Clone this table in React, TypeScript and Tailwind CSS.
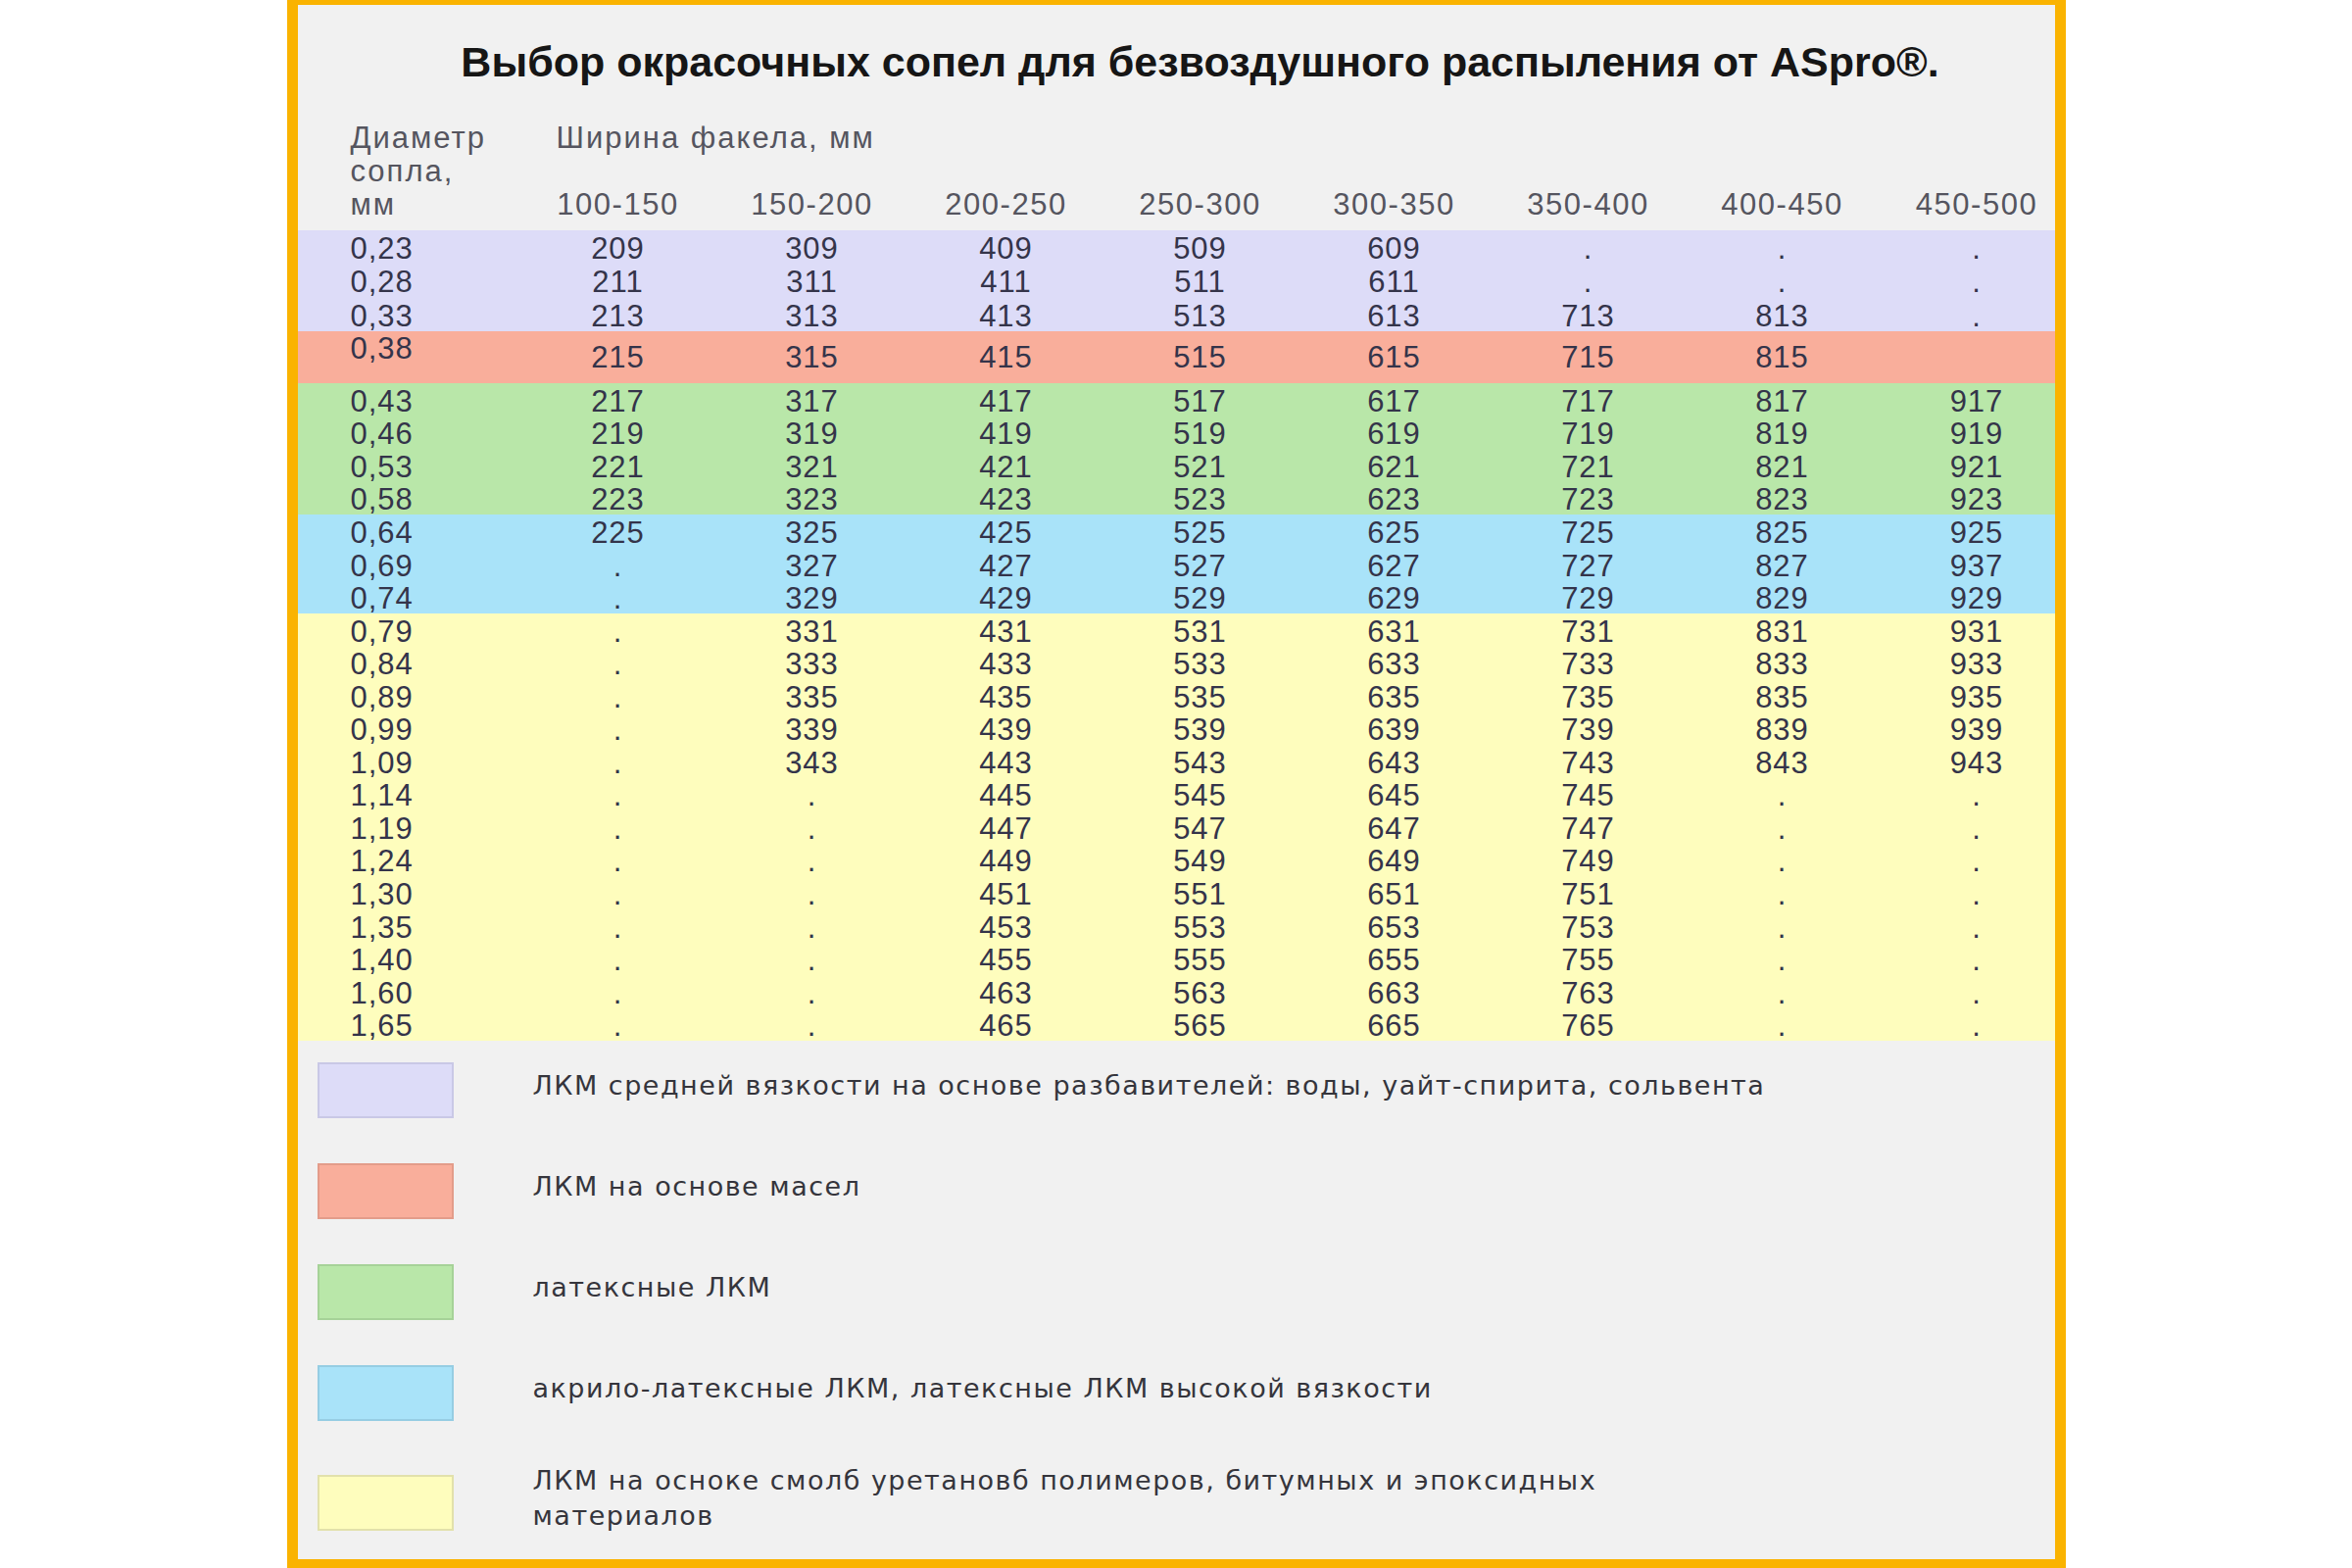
import * as React from "react";

type Band = {
  bg: string;
  h: string;
  rows: [string, string[]][];
};

const COLS = "grid grid-cols-[228px_repeat(7,198px)_1fr]";

const bands: Band[] = [
  {
    bg: "bg-[#dddcf8]",
    h: "h-[103px]",
    rows: [
      ["0,23", ["209", "309", "409", "509", "609", ".", ".", "."]],
      ["0,28", ["211", "311", "411", "511", "611", ".", ".", "."]],
      ["0,33", ["213", "313", "413", "513", "613", "713", "813", "."]],
    ],
  },
  {
    bg: "bg-[#b9e7a9]",
    h: "h-[134px]",
    rows: [
      ["0,43", ["217", "317", "417", "517", "617", "717", "817", "917"]],
      ["0,46", ["219", "319", "419", "519", "619", "719", "819", "919"]],
      ["0,53", ["221", "321", "421", "521", "621", "721", "821", "921"]],
      ["0,58", ["223", "323", "423", "523", "623", "723", "823", "923"]],
    ],
  },
  {
    bg: "bg-[#a9e3f9]",
    h: "h-[101px]",
    rows: [
      ["0,64", ["225", "325", "425", "525", "625", "725", "825", "925"]],
      ["0,69", [".", "327", "427", "527", "627", "727", "827", "937"]],
      ["0,74", [".", "329", "429", "529", "629", "729", "829", "929"]],
    ],
  },
  {
    bg: "bg-[#fefdbd]",
    h: "h-[436px]",
    rows: [
      ["0,79", [".", "331", "431", "531", "631", "731", "831", "931"]],
      ["0,84", [".", "333", "433", "533", "633", "733", "833", "933"]],
      ["0,89", [".", "335", "435", "535", "635", "735", "835", "935"]],
      ["0,99", [".", "339", "439", "539", "639", "739", "839", "939"]],
      ["1,09", [".", "343", "443", "543", "643", "743", "843", "943"]],
      ["1,14", [".", ".", "445", "545", "645", "745", ".", "."]],
      ["1,19", [".", ".", "447", "547", "647", "747", ".", "."]],
      ["1,24", [".", ".", "449", "549", "649", "749", ".", "."]],
      ["1,30", [".", ".", "451", "551", "651", "751", ".", "."]],
      ["1,35", [".", ".", "453", "553", "653", "753", ".", "."]],
      ["1,40", [".", ".", "455", "555", "655", "755", ".", "."]],
      ["1,60", [".", ".", "463", "563", "663", "763", ".", "."]],
      ["1,65", [".", ".", "465", "565", "665", "765", ".", "."]],
    ],
  },
];

const ranges = [
  "100-150",
  "150-200",
  "200-250",
  "250-300",
  "300-350",
  "350-400",
  "400-450",
  "450-500",
];

const legend = [
  {
    sw: "bg-[#dddcf8] border-[#c9c8e6]",
    lines: ["ЛКМ средней вязкости на основе разбавителей: воды, уайт-спирита, сольвента"],
  },
  { sw: "bg-[#f9ae9b] border-[#e39c8a]", lines: ["ЛКМ на основе масел"] },
  { sw: "bg-[#b9e7a9] border-[#a6d298]", lines: ["латексные ЛКМ"] },
  {
    sw: "bg-[#a9e3f9] border-[#96cde3]",
    lines: ["акрило-латексные ЛКМ, латексные ЛКМ высокой вязкости"],
  },
  {
    sw: "bg-[#fefdbd] border-[#e2e1ab]",
    lines: [
      "ЛКМ на осноке смолб уретановб полимеров, битумных и эпоксидных",
      "материалов",
    ],
  },
];

function Cells({ values }: { values: string[] }) {
  return (
    <>
      {values.map((v, i) => (
        <div key={i} className={i === 7 ? "pl-[20px] text-center" : "text-center"}>
          {v}
        </div>
      ))}
    </>
  );
}

function DataRow({ d, values }: { d: string; values: string[] }) {
  return (
    <div className={`${COLS} min-h-0 flex-1 items-center pt-[3px] leading-[29px]`}>
      <div className="pl-[54px]">{d}</div>
      <Cells values={values} />
    </div>
  );
}

function BandBlock({ band }: { band: Band }) {
  return (
    <div className={`flex flex-col ${band.bg} ${band.h}`}>
      {band.rows.map(([d, v]) => (
        <DataRow key={d} d={d} values={v} />
      ))}
    </div>
  );
}

export default function App() {
  return (
    <div className="min-h-[1600px] bg-white">
      <div className="mx-auto h-[1600px] w-[1815px] border-t-[5px] border-r-[11px] border-b-[9px] border-l-[11px] border-[#fab300] bg-[#f1f1f1]">
        <h1 className="pt-[32px] pl-[49px] text-center font-['Liberation_Sans',Arial,sans-serif] text-[43px] leading-[52px] font-bold text-[#161616]">
          Выбор окрасочных сопел для безвоздушного распыления от ASpro®.
        </h1>

        <div className="font-['Liberation_Sans',Arial,sans-serif] text-[31px] tracking-[1px]">
          <div className="mt-[35px] flex leading-[34px] tracking-[2px] text-[#55555f]">
            <div className="w-[228px] shrink-0 pl-[54px]">
              Диаметр
              <br />
              сопла,
              <br />
              мм
            </div>
            <div className="flex flex-1 flex-col">
              <div className="pl-[36px]">Ширина факела, мм</div>
              <div className="h-[34px]" />
              <div className="grid grid-cols-[repeat(7,198px)_1fr] tracking-[1.5px]">
                {ranges.map((r, i) => (
                  <div key={r} className={i === 7 ? "pl-[20px] text-center" : "text-center"}>
                    {r}
                  </div>
                ))}
              </div>
            </div>
          </div>

          <div className="mt-[9px] text-[#34344a]">
            <BandBlock band={bands[0]} />
            <div className={`${COLS} h-[53px] bg-[#f9ae9b]`}>
              <div className="pt-[3px] pl-[54px] leading-[30px]">0,38</div>
              <div className="col-span-8 grid grid-cols-[repeat(7,198px)_1fr] pt-[10px] leading-[34px]">
                <Cells values={["215", "315", "415", "515", "615", "715", "815", ""]} />
              </div>
            </div>
            <BandBlock band={bands[1]} />
            <BandBlock band={bands[2]} />
            <BandBlock band={bands[3]} />
          </div>
        </div>

        <div className="flex flex-col pt-[22px] font-['DejaVu_Sans',Verdana,sans-serif] text-[27px] leading-[36px] tracking-[1.5px] text-[#35353c]">
          {legend.map((l, i) => (
            <div
              key={i}
              className={`flex h-[57px] items-center ${i === 4 ? "mt-[55px]" : i > 0 ? "mt-[46px]" : ""}`}
            >
              <div className={`ml-[20px] h-[57px] w-[139px] shrink-0 border-2 ${l.sw}`} />
              <div className="ml-[81px] pb-[10px]">
                {l.lines.map((t, j) => (
                  <div key={j}>{t}</div>
                ))}
              </div>
            </div>
          ))}
        </div>
      </div>
    </div>
  );
}
